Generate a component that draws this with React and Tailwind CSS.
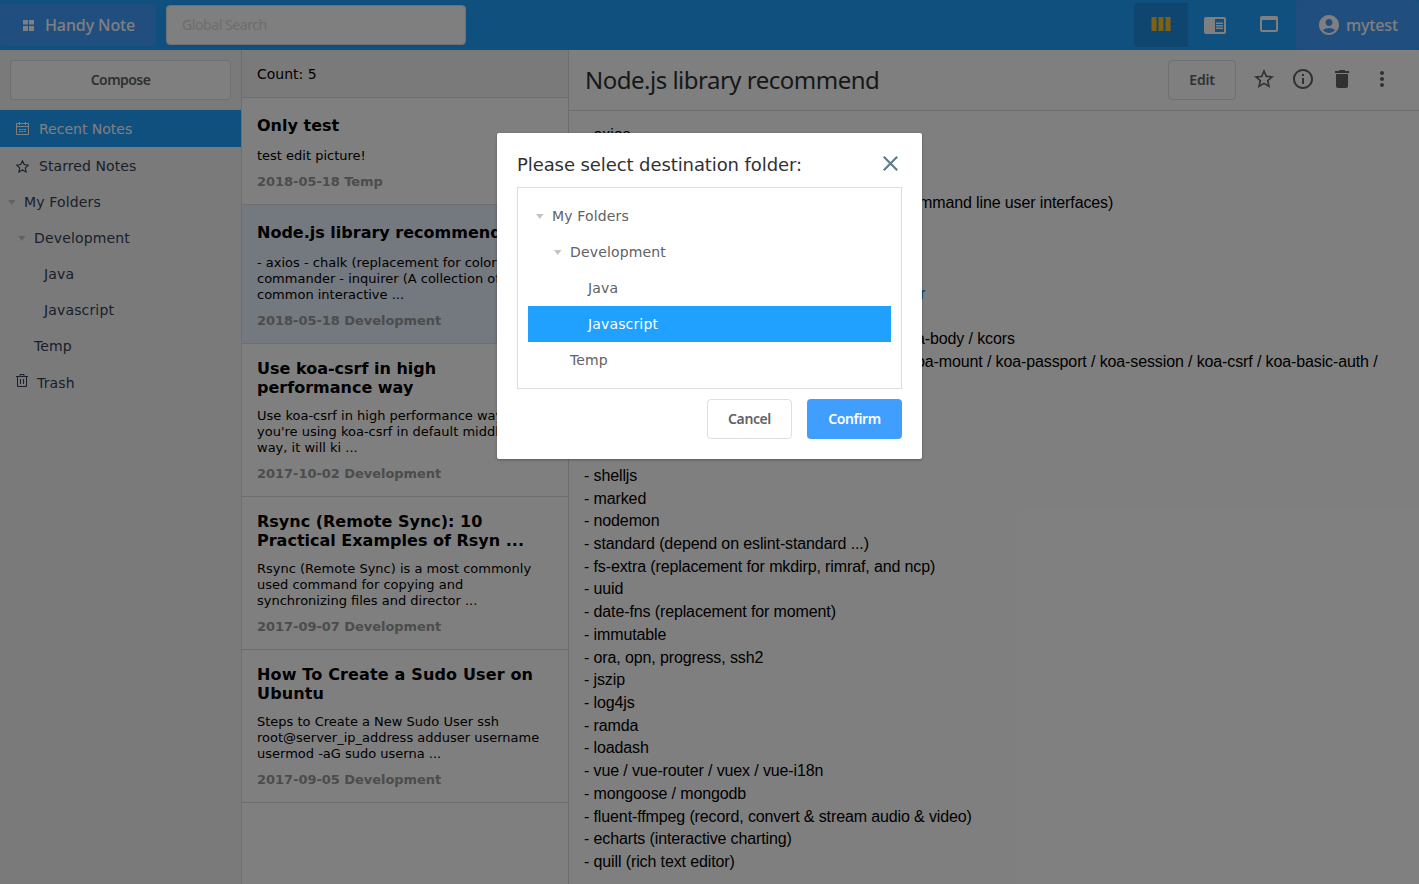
import React from 'react';
import { MdChromeReaderMode, MdWebAsset, MdAccountCircle, MdStarBorder, MdInfoOutline, MdDelete, MdMoreVert } from 'react-icons/md';

const notes = [
  { title: ['Only test'], body: ['test edit picture!'], meta: '2018-05-18 Temp' },
  { title: ['Node.js library recommend'], body: ['- axios - chalk (replacement for colors) -', 'commander - inquirer (A collection of', 'common interactive ...'], meta: '2018-05-18 Development', active: true },
  { title: ['Use koa-csrf in high', 'performance way'], body: ["Use koa-csrf in high performance way If", "you're using koa-csrf in default middleware", 'way, it will ki ...'], meta: '2017-10-02 Development' },
  { title: ['Rsync (Remote Sync): 10', 'Practical Examples of Rsyn ...'], body: ['Rsync (Remote Sync) is a most commonly', 'used command for copying and', 'synchronizing files and director ...'], meta: '2017-09-07 Development' },
  { title: ['How To Create a Sudo User on', 'Ubuntu'], body: ['Steps to Create a New Sudo User ssh', 'root@server_ip_address adduser username', 'usermod -aG sudo userna ...'], meta: '2017-09-05 Development', wide: true },
];

const lines = [
  '- axios', '', '',
  { pad: 'pl-[335px]', tail: 'mmand line user interfaces)' },
  '', '', '', { pad: 'pl-[336px] text-[#0066cc]', tail: 'r' }, '',
  { pad: 'pl-[332px]', tail: 'a-body / kcors' },
  { pad: 'pl-[332px]', tail: 'oa-mount / koa-passport / koa-session / koa-csrf / koa-basic-auth /' },
  '', '', '', '',
  '- shelljs', '- marked', '- nodemon', '- standard (depend on eslint-standard ...)',
  '- fs-extra (replacement for mkdirp, rimraf, and ncp)', '- uuid', '- date-fns (replacement for moment)',
  '- immutable', '- ora, opn, progress, ssh2', '- jszip', '- log4js', '- ramda', '- loadash',
  '- vue / vue-router / vuex / vue-i18n', '- mongoose / mongodb',
  '- fluent-ffmpeg (record, convert & stream audio & video)', '- echarts (interactive charting)', '- quill (rich text editor)',
];

function Caret() {
  return <svg width="8" height="5" viewBox="0 0 8 5"><path d="M0 0h7.5L3.75 5z" fill="#c0c4cc" /></svg>;
}

function Folder({ label, pad, caret, active }) {
  return (
    <div className={`flex h-9 items-center tracking-[0.15px] ${pad} ${active ? 'bg-[#20a0ff] text-white' : ''}`}>
      <span className="w-4 shrink-0">{caret && <Caret />}</span>{label}
    </div>
  );
}

function Header() {
  return (
    <header className="flex h-[50px] shrink-0 bg-[#20a0ff] font-['Noto_Sans',sans-serif] font-medium text-white">
      <div className="mt-1 flex h-[42px] w-[156px] items-center rounded bg-[#409eff] pl-[23px]">
        <svg width="11" height="11" viewBox="0 0 11 11" fill="currentColor"><path d="M0 0h5v4.5H0zM6 0h5v4.5H6zM0 6h5v5H0zM6 6h5v5H6z" /></svg>
        <span className="ml-[11px] text-base tracking-[-0.1px]">Handy Note</span>
      </div>
      <div className="ml-[10px] mt-[5px] flex h-10 w-[300px] items-center rounded border border-[#dcdfe6] bg-white pb-px pl-[15px] text-[14px] font-normal tracking-[-0.42px] text-[#d8dade]">Global Search</div>
      <div className="ml-auto flex">
        <div className="mt-[3px] flex h-11 w-[54px] items-center justify-center rounded-l bg-[#1d8ce0] pb-[2px] text-[#ffc21f]">
          <svg width="20" height="14" viewBox="0 0 20 14" fill="currentColor"><path d="M.5 0h5v14h-5zM7.5 0h5v14h-5zM14.500 0h5v14h-5z" /></svg>
        </div>
        <div className="flex w-[54px] items-center justify-center pb-px"><MdChromeReaderMode size={24} /></div>
        <div className="flex w-[54px] items-center justify-center pb-[2px]"><MdWebAsset size={24} /></div>
        <div className="flex w-[123px] items-center rounded bg-[#409eff] pl-[21px]">
          <MdAccountCircle size={24} /><span className="ml-[5px] text-base tracking-[-0.15px]">mytest</span>
        </div>
      </div>
    </header>
  );
}

function Sidebar() {
  return (
    <aside className="w-[242px] shrink-0 border-r border-[#ddd] bg-[#f5f5f5] text-[14px] text-[#324157]">
      <div className="mx-[10px] my-[10px] flex h-10 items-center justify-center rounded border border-[#dcdfe6] bg-white pb-[2px] font-['Noto_Sans',sans-serif] text-[14px] font-semibold tracking-[-0.55px] text-[#606266]">Compose</div>
      <div className="flex h-[37px] items-center bg-[#20a0ff] pl-4 text-white">
        <svg width="13" height="13" viewBox="0 0 13 13" fill="none" stroke="currentColor"><path d="M.5 1.5h12v11H.5zM.5 4.5h12M3.5 0v3M9.5 0v3" /><path d="M3 7.5h7M3 9.5h7" strokeDasharray="2 .5" /></svg>
        <span className="ml-[10px] pt-[2px]">Recent Notes</span>
      </div>
      <div className="flex h-[37px] items-center pl-4">
        <svg className="mt-px" width="13" height="13" viewBox="0 0 13 13" fill="none" stroke="currentColor" strokeWidth="1.1"><path d="M6.500 .9l1.7 3.700 4.100.500-3 2.800.8 4.100-3.600-2-3.600 2 .8-4.100-3-2.800 4.100-.5z" /></svg>
        <span className="ml-[10px] pt-[2px] tracking-[0.08px]">Starred Notes</span>
      </div>
      <Folder label="My Folders" pad="pl-2" caret />
      <Folder label="Development" pad="pl-[18px]" caret />
      <Folder label="Java" pad="pl-7" />
      <Folder label="Javascript" pad="pl-7" />
      <Folder label="Temp" pad="pl-[18px]" />
      <div className="flex h-[37px] items-center pl-4">
        <svg className="mb-1" width="12" height="13" viewBox="0 0 12 13" fill="none" stroke="currentColor"><path d="M0 2.5h12M4 2V.5h4V2M1.5 2.5v10h9v-10M4.5 5v5M7.5 5v5" /></svg>
        <span className="ml-[9px] pt-[2px] tracking-[0.15px]">Trash</span>
      </div>
    </aside>
  );
}

function NoteList() {
  return (
    <section className="w-[327px] shrink-0 border-r border-[#ddd] text-black">
      <div className="flex h-12 items-center border-b border-[#ddd] bg-[#f5f5f5] pl-[15px] pt-[2px] text-[14px]">Count: 5</div>
      {notes.map((n) => {
        const tall = n.title.length > 1;
        return (
          <article key={n.meta + n.title[0]} className={`overflow-hidden whitespace-nowrap border-b border-[#ddd] pb-[15px] pl-[15px] ${tall ? 'pt-[15px]' : 'pt-[18px]'} ${n.active ? 'bg-[#e8f0ff]' : ''}`}>
            <h3 className={`text-base/[19px] font-bold ${n.wide ? 'tracking-[0.15px]' : ''}`}>{n.title.map((t) => <div key={t}>{t}</div>)}</h3>
            <div className={`text-[13px]/[16px] ${tall ? 'mt-[11px]' : 'mt-[13px]'}`}>{n.body.map((t) => <div key={t}>{t}</div>)}</div>
            <div className="mt-[10px] text-[13px]/[15px] font-bold tracking-[-0.04px] text-[#999]">{n.meta}</div>
          </article>
        );
      })}
    </section>
  );
}

function Detail() {
  return (
    <main className="min-w-0 flex-1">
      <div className="flex h-[61px] items-center border-b border-[#ddd] pl-4 text-[#606266]">
        <h1 className="font-['Noto_Sans',sans-serif] text-[24px] tracking-[-0.5px] text-[#303133]">Node.js library recommend</h1>
        <div className="ml-auto mr-4 flex h-10 w-[68px] items-center justify-center rounded border border-[#dcdfe6] pb-[2px] font-['Noto_Sans',sans-serif] text-[14px] font-semibold tracking-[-0.2px]">Edit</div>
        <div className="flex items-center pb-[2px]">
          <MdStarBorder size={24} className="mr-[15px]" />
          <MdInfoOutline size={24} className="mr-[15px]" />
          <MdDelete size={24} className="mr-4" />
          <MdMoreVert size={24} className="mr-[25px]" />
        </div>
      </div>
      <div className="whitespace-nowrap pl-[15px] pt-[13px] font-['Liberation_Sans',sans-serif] text-base/[22.72px] tracking-[-0.12px] text-black">
        {lines.map((l, i) => (
          <div key={i} className={`h-[22.72px] ${l.pad || ''}`}>{l.tail || l}</div>
        ))}
      </div>
    </main>
  );
}

function Dialog() {
  return (
    <div className="absolute inset-0 flex items-start justify-center bg-black/50">
      <div className="mt-[133px] h-[326px] w-[425px] rounded-[2px] bg-white px-5 shadow-[0_1px_3px_rgba(0,0,0,0.3)]">
        <div className="flex h-[54px] items-center justify-between pt-[10px] text-lg text-[#303133]">
          <span className="tracking-[-0.09px]">Please select destination folder:</span>
          <svg className="mb-1 mr-1" width="15" height="15" viewBox="0 0 15 15" fill="none" stroke="#607d8b" strokeWidth="2.2"><path d="M.8.8l13.4 13.4M14.2.8L.8 14.2" /></svg>
        </div>
        <div className="h-[202px] border border-[#ddd] p-[10px] text-[14px] text-[#606266]">
          <Folder label="My Folders" pad="pl-2" caret />
          <Folder label="Development" pad="pl-[26px]" caret />
          <Folder label="Java" pad="pl-11" />
          <Folder label="Javascript" pad="pl-11" active />
          <Folder label="Temp" pad="pl-[26px]" />
        </div>
        <div className="mt-[10px] flex justify-end gap-[15px] font-['Noto_Sans',sans-serif] text-[14px] font-semibold tracking-[-0.4px]">
          <button className="h-10 w-[85px] rounded border border-[#dcdfe6] pb-[2px] text-[#606266]">Cancel</button>
          <button className="h-10 w-[95px] rounded bg-[#409eff] pb-[2px] text-white">Confirm</button>
        </div>
      </div>
    </div>
  );
}

export default function App() {
  return (
    <div className="relative flex h-[884px] w-[1419px] flex-col overflow-hidden bg-white font-['DejaVu_Sans',sans-serif]">
      <Header />
      <div className="flex min-h-0 flex-1">
        <Sidebar />
        <NoteList />
        <Detail />
      </div>
      <Dialog />
    </div>
  );
}
